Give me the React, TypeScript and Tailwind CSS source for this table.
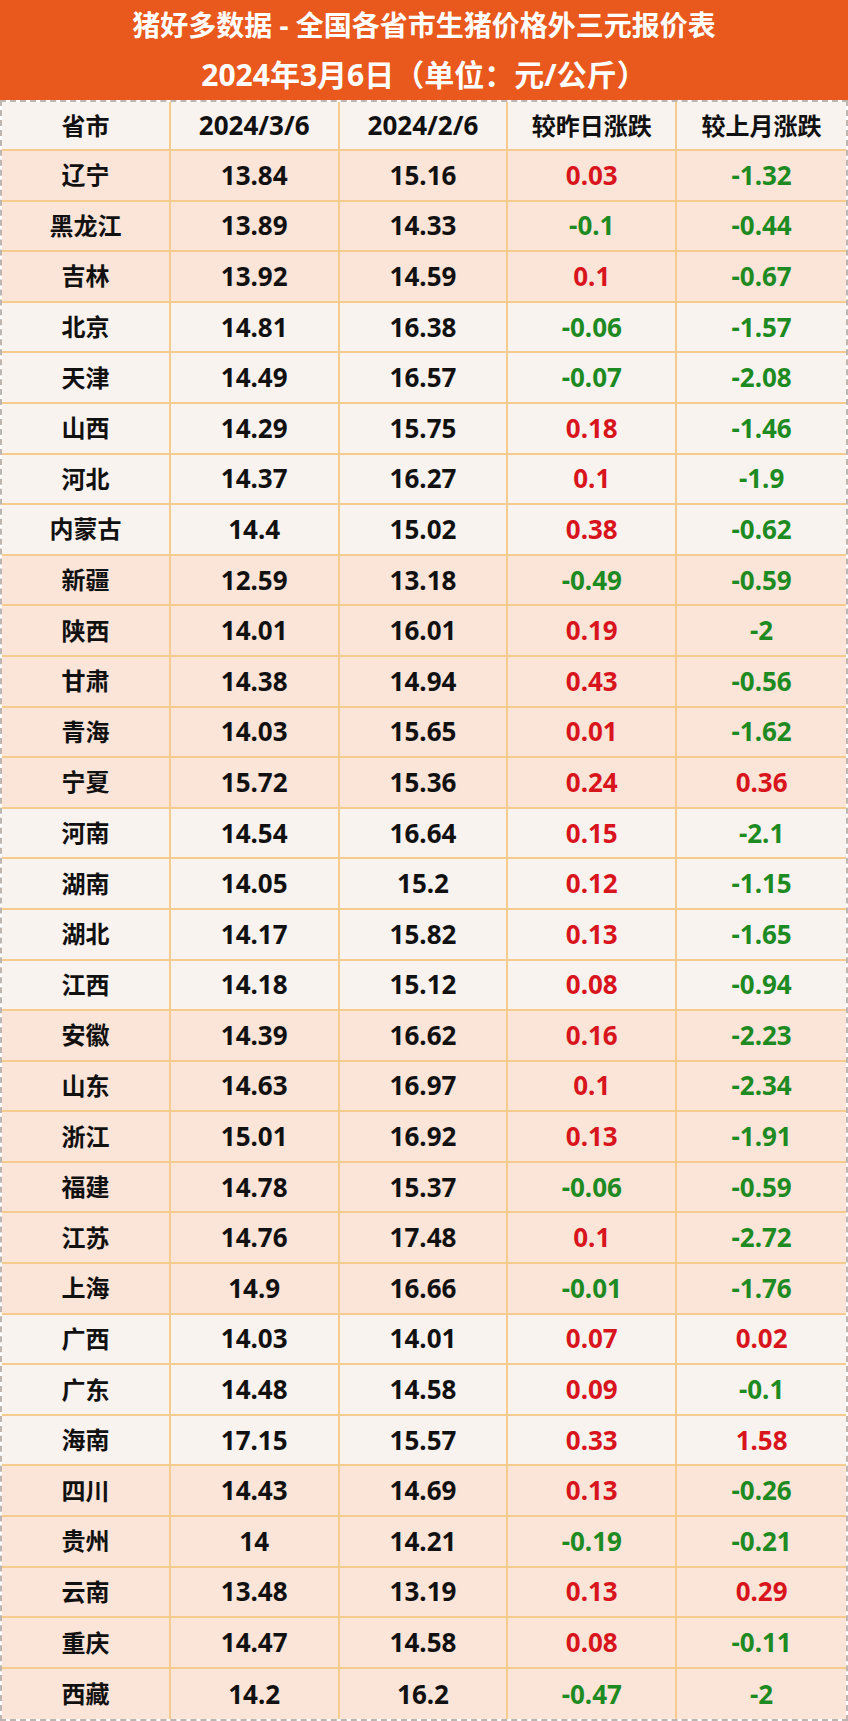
// Pig price table: 全国各省市生猪价格外三元报价表
const FONT = { fontFamily: '"Noto Sans", "Noto Sans CJK SC", sans-serif' };

type Row = {
  name: string;
  today: string;
  lastMonth: string;
  dayChange: string;
  monthChange: string;
  light?: boolean;
};

const rows: Row[] = [
  { name: '辽宁', today: '13.84', lastMonth: '15.16', dayChange: '0.03', monthChange: '-1.32' },
  { name: '黑龙江', today: '13.89', lastMonth: '14.33', dayChange: '-0.1', monthChange: '-0.44' },
  { name: '吉林', today: '13.92', lastMonth: '14.59', dayChange: '0.1', monthChange: '-0.67' },
  { name: '北京', today: '14.81', lastMonth: '16.38', dayChange: '-0.06', monthChange: '-1.57', light: true },
  { name: '天津', today: '14.49', lastMonth: '16.57', dayChange: '-0.07', monthChange: '-2.08', light: true },
  { name: '山西', today: '14.29', lastMonth: '15.75', dayChange: '0.18', monthChange: '-1.46', light: true },
  { name: '河北', today: '14.37', lastMonth: '16.27', dayChange: '0.1', monthChange: '-1.9', light: true },
  { name: '内蒙古', today: '14.4', lastMonth: '15.02', dayChange: '0.38', monthChange: '-0.62', light: true },
  { name: '新疆', today: '12.59', lastMonth: '13.18', dayChange: '-0.49', monthChange: '-0.59' },
  { name: '陕西', today: '14.01', lastMonth: '16.01', dayChange: '0.19', monthChange: '-2' },
  { name: '甘肃', today: '14.38', lastMonth: '14.94', dayChange: '0.43', monthChange: '-0.56' },
  { name: '青海', today: '14.03', lastMonth: '15.65', dayChange: '0.01', monthChange: '-1.62' },
  { name: '宁夏', today: '15.72', lastMonth: '15.36', dayChange: '0.24', monthChange: '0.36' },
  { name: '河南', today: '14.54', lastMonth: '16.64', dayChange: '0.15', monthChange: '-2.1', light: true },
  { name: '湖南', today: '14.05', lastMonth: '15.2', dayChange: '0.12', monthChange: '-1.15', light: true },
  { name: '湖北', today: '14.17', lastMonth: '15.82', dayChange: '0.13', monthChange: '-1.65', light: true },
  { name: '江西', today: '14.18', lastMonth: '15.12', dayChange: '0.08', monthChange: '-0.94', light: true },
  { name: '安徽', today: '14.39', lastMonth: '16.62', dayChange: '0.16', monthChange: '-2.23' },
  { name: '山东', today: '14.63', lastMonth: '16.97', dayChange: '0.1', monthChange: '-2.34' },
  { name: '浙江', today: '15.01', lastMonth: '16.92', dayChange: '0.13', monthChange: '-1.91' },
  { name: '福建', today: '14.78', lastMonth: '15.37', dayChange: '-0.06', monthChange: '-0.59' },
  { name: '江苏', today: '14.76', lastMonth: '17.48', dayChange: '0.1', monthChange: '-2.72' },
  { name: '上海', today: '14.9', lastMonth: '16.66', dayChange: '-0.01', monthChange: '-1.76' },
  { name: '广西', today: '14.03', lastMonth: '14.01', dayChange: '0.07', monthChange: '0.02', light: true },
  { name: '广东', today: '14.48', lastMonth: '14.58', dayChange: '0.09', monthChange: '-0.1', light: true },
  { name: '海南', today: '17.15', lastMonth: '15.57', dayChange: '0.33', monthChange: '1.58', light: true },
  { name: '四川', today: '14.43', lastMonth: '14.69', dayChange: '0.13', monthChange: '-0.26' },
  { name: '贵州', today: '14', lastMonth: '14.21', dayChange: '-0.19', monthChange: '-0.21' },
  { name: '云南', today: '13.48', lastMonth: '13.19', dayChange: '0.13', monthChange: '0.29' },
  { name: '重庆', today: '14.47', lastMonth: '14.58', dayChange: '0.08', monthChange: '-0.11' },
  { name: '西藏', today: '14.2', lastMonth: '16.2', dayChange: '-0.47', monthChange: '-2' },
];

function changeColor(v: string) {
  return v.startsWith('-') ? 'text-[#1d8a22]' : 'text-[#d8141c]';
}

const cell = 'flex items-center justify-center border-r-2 border-[#f6cb8e]';
const lastCell = 'flex items-center justify-center';

export default function App() {
  return (
    <div className="w-[848px] bg-white font-bold" style={FONT}>
      {/* Title band */}
      <div className="bg-[#e9581c] text-white flex flex-col">
        <div className="h-[50px] flex items-center justify-center text-[28px] leading-none">
          猪好多数据 - 全国各省市生猪价格外三元报价表
        </div>
        <div className="h-[50px] flex items-center justify-center text-[30px] leading-none">
          2024年3月6日（单位：元/公斤）
        </div>
      </div>

      {/* Table */}
      <div className="border-2 border-dashed border-[#bdb5b0] text-[#111111]">
        <div className="grid grid-cols-5 h-[49px] border-b-2 border-[#f6cb8e] bg-[#f9f3f0]">
          <div className={`${cell} text-[24px]`}>省市</div>
          <div className={`${cell} text-[26px]`}>2024/3/6</div>
          <div className={`${cell} text-[26px]`}>2024/2/6</div>
          <div className={`${cell} text-[24px]`}>较昨日涨跌</div>
          <div className={`${lastCell} text-[24px]`}>较上月涨跌</div>
        </div>

        {rows.map((r, i) => (
          <div
            key={r.name}
            className={`grid grid-cols-5 h-[50.6px] ${
              i < rows.length - 1 ? 'border-b-2 border-[#f6cb8e]' : ''
            } ${r.light ? 'bg-[#f9f3f0]' : 'bg-[#fbe4d8]'}`}
          >
            <div className={`${cell} text-[24px]`}>{r.name}</div>
            <div className={`${cell} text-[26px]`}>{r.today}</div>
            <div className={`${cell} text-[26px]`}>{r.lastMonth}</div>
            <div className={`${cell} text-[26px] ${changeColor(r.dayChange)}`}>{r.dayChange}</div>
            <div className={`${lastCell} text-[26px] ${changeColor(r.monthChange)}`}>{r.monthChange}</div>
          </div>
        ))}
      </div>
    </div>
  );
}
